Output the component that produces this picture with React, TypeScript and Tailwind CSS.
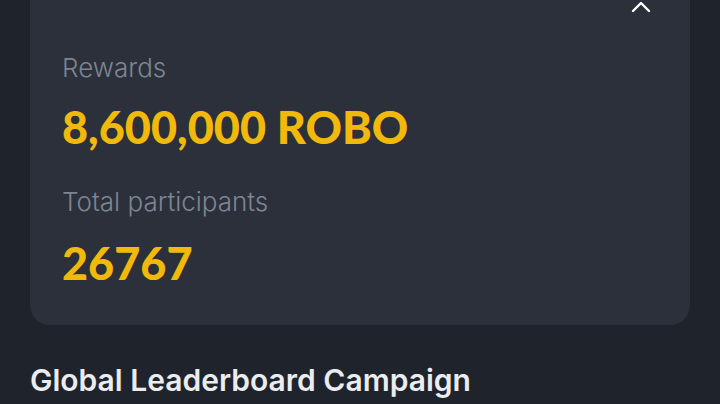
import React from "react";

export default function App() {
  return (
    <div className="w-[720px] h-[404px] overflow-hidden bg-[#1f232b] px-[30px]" style={{ fontFamily: "Inter, 'Noto Sans', sans-serif" }}>
      <div className="bg-[#2b303b] rounded-b-[20px] pl-[32px] pr-[36px] pb-[37px]">
        <div className="flex justify-end h-[16px]">
          <svg width="22" height="14" viewBox="0 0 22 14" className="mr-[2px]">
            <path d="M3 11 L11 3 L19 11" fill="none" stroke="#ffffff" strokeWidth="2.4" strokeLinecap="round" strokeLinejoin="round" />
          </svg>
        </div>
        <div className="mt-[37px] text-[26px] leading-[30px] font-light text-[#7d8593]">Rewards</div>
        <div className="mt-[19px] text-[45px] leading-[50px] font-black text-[#f0b90b]" style={{ fontFamily: "Lato, sans-serif" }}>8,600,000 ROBO</div>
        <div className="mt-[35px] text-[26px] leading-[30px] font-light text-[#7d8593]">Total participants</div>
        <div className="mt-[21px] text-[45px] leading-[50px] font-black text-[#f0b90b]" style={{ fontFamily: "Lato, sans-serif" }}>26767</div>
      </div>
      <div className="mt-[37px] text-[30px] leading-[36px] font-semibold text-[#eaecef]">Global Leaderboard Campaign</div>
    </div>
  );
}
